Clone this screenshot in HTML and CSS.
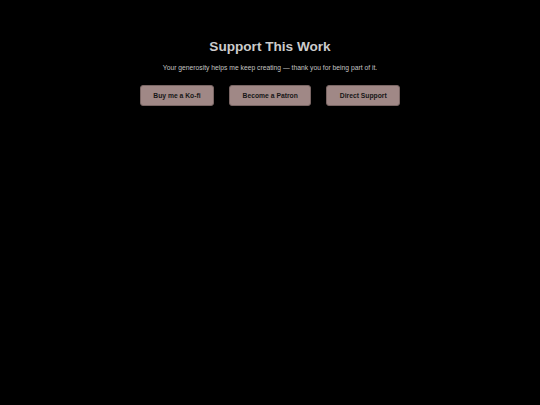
FILE: index.html
```html
<!DOCTYPE html>
<html lang="en">
<head>
<meta charset="utf-8">
<title>Support This Work</title>
<link rel="stylesheet" href="styles.css">
</head>
<body>
<main class="support">
  <h1 class="support-title">Support This Work</h1>
  <p class="support-text">Your generosity helps me keep creating — thank you for being part of it.</p>
  <div class="support-actions">
    <a class="support-btn" href="#">Buy me a Ko-fi</a>
    <a class="support-btn" href="#">Become a Patron</a>
    <a class="support-btn" href="#">Direct Support</a>
  </div>
</main>
</body>
</html>
```
FILE: styles.css
```css
html, body {
  margin: 0;
  padding: 0;
  background: #000;
  height: 100%;
}
body {
  font-family: "Liberation Sans", Arial, sans-serif;
  color: #cfcfcf;
}
.support {
  display: flex;
  flex-direction: column;
  align-items: center;
  padding-top: 39px;
}
.support-title {
  margin: 0;
  font-size: 13.6px;
  line-height: 16px;
  font-weight: bold;
  color: #cccccc;
}
.support-text {
  margin: 8px 0 0;
  font-size: 6.75px;
  line-height: 9px;
  color: #c4c4c4;
}
.support-actions {
  display: flex;
  gap: 15px;
  margin-top: 13px;
}
.support-btn {
  display: block;
  box-sizing: border-box;
  height: 21px;
  line-height: 19px;
  padding: 0 12.5px;
  font-size: 6.75px;
  font-weight: bold;
  color: #161616;
  text-decoration: none;
  background: #a08886;
  border: 1px solid #7a6664;
  border-radius: 3px;
}
```
